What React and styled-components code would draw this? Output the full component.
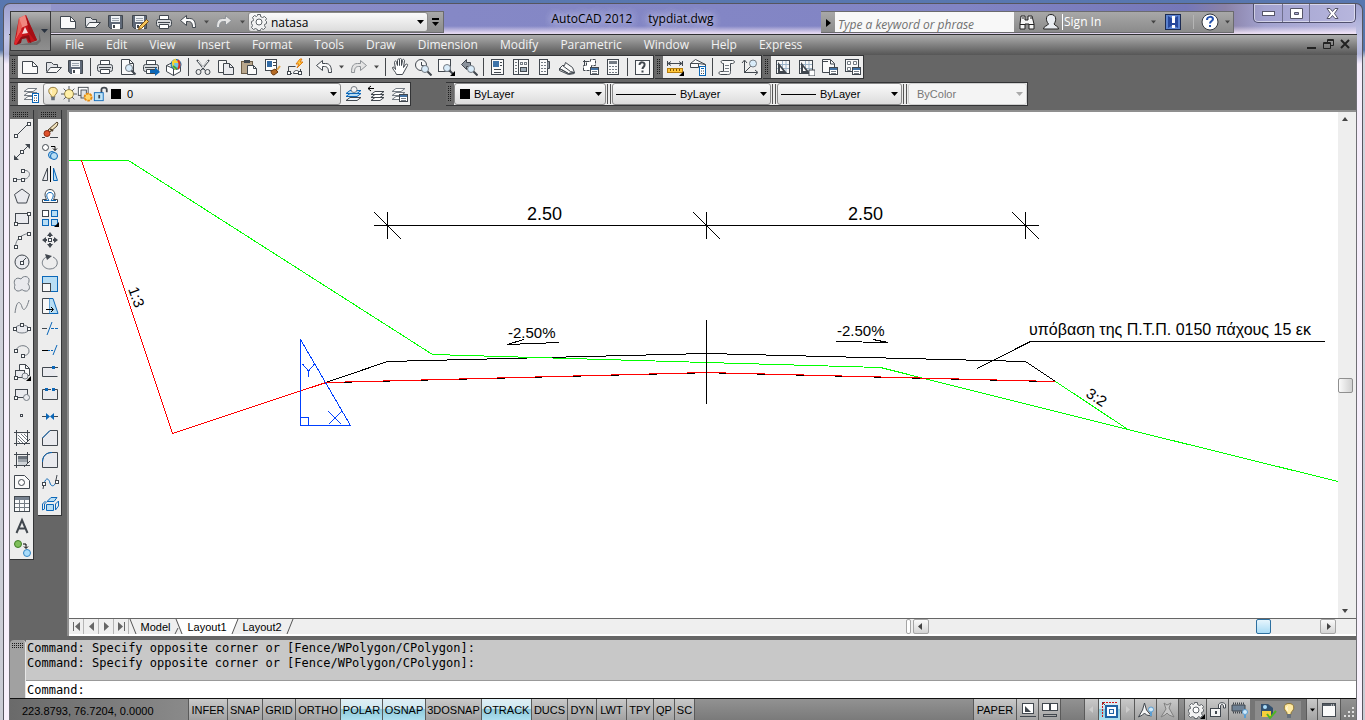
import React from "react";
import styled, { createGlobalStyle, css } from "styled-components";

const UI = `"Open Sans", "Noto Sans", sans-serif`;
const SMALL = `"Liberation Sans", Arial, sans-serif`;
const MONO = `"DejaVu Sans Mono", monospace`;

const D = "#41474e";
const M = "#757c84";
const B = "#0b67b8";
const L = "#b9def4";
const F = "#e9eaee";

const GlobalStyle = createGlobalStyle`
  *, *::before, *::after { box-sizing: border-box; }
  body { margin: 0; font-family: ${UI}; font-size: 12px; color: #000; }
  button, input, select { font: inherit; color: inherit; margin: 0; }
`;

/* ---------- icon drawings, each on an 18 x 18 grid ---------- */
const P = (d, fill = "none", stroke = D, w = 1) => (
  <path d={d} fill={fill} stroke={stroke} strokeWidth={w} />
);
const node = (x, y, c = D) => (
  <rect x={Math.floor(x) - 1.5} y={Math.floor(y) - 1.5} width="3" height="3" fill="#fff" stroke={c} />
);
const mag = (x, y) => (
  <>
    <circle cx={x} cy={y} r="3.500" fill="#d9ecfa" stroke={M} />
    {P(`M${x + 2.5} ${y + 2.5}l4 4`, "none", D, 2)}
  </>
);
const flyout = <path d="M18 13v5h-5z" fill="#000" />;
const floppy = (
  <>
    {P("M1.500 2.500h14v13h-12l-2-2z", "#5e6877")}
    <rect x="4" y="3" width="9" height="6" fill="#eef1f4" />
    <path d="M5 5.500h7M5 7.500h7" stroke="#9aa3ad" />
    <rect x="5" y="11" width="8" height="5" fill="#fff" />
    <rect x="6" y="12" width="2" height="3" fill={D} />
  </>
);
const printer = (
  <>
    {P("M4.500 7V2.500h9V7", "#fff")}
    <rect x="1.500" y="6.500" width="15" height="7" rx="2" fill="#d9dbde" stroke={D} />
    <path d="M3 9.500h12" stroke={D} />
    {P("M4.500 11.500h9v4h-9z", "#fff")}
  </>
);
const pages = (
  <>
    {P("M1.500 2.500h8v12h-8z", "#f7f7f7")}
    {P("M6.500 5.500h6l4 4v7h-10z", F)}
    {P("M12.500 5.500v4h4")}
  </>
);
const sheets = P("M6 3.500h9l-4 3H2zM6 7.500h9l-4 3H2zM6 11.500h9l-4 3H2z", "#fff", M);
const blueSheets = (
  <>
    {P("M6 5.500h11l-4 3H2z", L, B)}
    {P("M6 8.500h11l-4 3H2z", L, B)}
    {P("M6 12.500h11l-4 3H2z", "#eaf5fc", D)}
  </>
);
const smallPanel = (
  <>
    <rect x="9.500" y="9.500" width="8" height="7" fill="#fff" stroke={D} />
    <rect x="10" y="10" width="7" height="2" fill="#4473a5" />
    <path d="M11 13.500h5M11 15.500h5" stroke={M} />
  </>
);
const calcMini = (
  <>
    <rect x="10.500" y="8.500" width="6" height="9" fill="#fff" stroke={B} />
    <path d="M12 10.500h3" stroke={B} />
    <path d="M12 13h1m1 0h1M12 15.500h1m1 0h1" stroke={D} />
  </>
);
const gear = (
  <>
    <path
      d="M7.500 1.500h3v2l2 1 2-1 2 2-1 2 1 1v2l-2 1v1l1 2-2 2-2-1-1 1v1h-3v-1l-2-1-2 1-2-2 1-2-1-2v-2l2-1v-1l-1-2 2-2 2 1 1-1z"
      fill="#f2f2f2" stroke="#5d6267"
    />
    <circle cx="9" cy="9" r="3" fill="#fff" stroke="#5d6267" />
  </>
);
const bulb = (
  <>
    <path d="M9 1.500c-6 0-6 6-2 9v2h4v-2c4-3 4-9-2-9z" fill="#ffe9a0" stroke="#8d7434" />
    <rect x="7" y="12" width="4" height="4" fill="#67707b" />
    <path d="M7.500 4.500c-1 1-1 2 0 4" stroke="#fff" fill="none" />
  </>
);
const undoPath = "M1.500 7.500l6-5v3h3c5 0 6 4 6 9h-3c0-4-1-6-4-6h-2v4z";
const redoPath = "M16.500 7.500l-6-5v3h-3c-5 0-6 4-6 9h3c0-4 1-6 4-6h2v4z";
const binder = (
  <>
    <rect x="2.500" y="2.500" width="13" height="13" fill="#f8f8f8" stroke={D} />
    <path d="M8.500 3v12M3 6.500h12M3 10.500h12M12 3v12" stroke="#9db4c8" />
    <path d="M4 4v11h9z" fill={D} />
    <path d="M6 9v4h3z" fill="#fff" />
  </>
);

const ICONS = {
  new: <>{P("M1.500 3.500h10l5 5v7h-15z", "#fafafa")}{P("M11.500 3.500v5h5")}</>,
  open: <>{P("M2.500 13.500V4.500h5l2 2h4v3", "#e1e3e7")}{P("M2.500 14.500l4-5h11l-5 5z", "#f7f7f7")}</>,
  save: floppy,
  saveas: (
    <>
      {floppy}
      {P("M7.500 16.500l1-3 7-7 2 2-7 7z", "#f6c65b", "#7a4f12")}
    </>
  ),
  print: printer,
  undo: P(undoPath, "#fafafa"),
  redo: P(redoPath, "#e4e4e4", "#8e9296"),
  preview: <>{P("M2.500 1.500h8l4 4v11h-12z", "#fafafa")}{P("M10.500 1.500v4h4")}{mag(10, 10)}</>,
  publish: <>{printer}<path d="M8 12h5V9l5 5-5 4v-3H8z" fill={B} /></>,
  globe: (
    <>
      {P("M1.500 7.500l6-3 8 3v6l-7 4-7-4z", "#fff")}{P("M1.500 7.500l7 3v7")}
      <circle cx="11" cy="6.500" r="5" fill="#6fc3ea" stroke="#155f95" />
      <path d="M11 1.500c-4 2-4 6 0 10M7 4h8" stroke="#f6d232" strokeWidth="2" fill="none" />
      <path d="M13 2c2 3 2 6 0 9" stroke="#d63322" strokeWidth="2" fill="none" />
      <path d="M8 8l4 3" stroke="#3ba43d" strokeWidth="2" />
    </>
  ),
  cut: (
    <>
      {P("M3 2l8 10M15 2L7 12", "none", D, 2)}
      <path d="M4 3l8 9M14 3l-8 9" stroke="#fff" />
      <circle cx="4.500" cy="14" r="2.500" fill="none" stroke={D} />
      <circle cx="13.500" cy="14" r="2.500" fill="none" stroke={D} />
    </>
  ),
  copy: pages,
  paste: (
    <>
      <rect x="1.500" y="3.500" width="11" height="12" fill="#b8a68c" stroke="#6b5b46" />
      <rect x="4" y="2" width="6" height="3" fill={D} />
      {P("M7.500 7.500h6l3 3v6h-9z", "#fafafa")}{P("M13.500 7.500v3h3")}
    </>
  ),
  match: (
    <>
      <rect x="2.500" y="1.500" width="11" height="11" fill="#fff" stroke={D} />
      <rect x="4" y="3" width="5" height="6" fill="#326ba6" />
      <path d="M10 4.500h3M10 7.500h3" stroke={D} />
      <path d="M8 13l4-2 3 3-4 3c-2 0-3-2-3-4z" fill="#b56a24" stroke="#6d3a0e" />
      <path d="M14 12l3-4" stroke="#e2a54c" strokeWidth="2" />
    </>
  ),
  block: (
    <>
      {P("M2.500 15.500v-7h7M2 15.500h4M14.500 11v3", "none")}
      {P("M7.500 15.500c0-4 6-4 6 0z", "#fff")}{node(3, 15)}{node(14, 15)}
      <path d="M14 1l-4 5h3l-2 4 6-6h-3l2-3z" fill="#ffc83d" stroke="#e07b10" />
    </>
  ),
  pan: (
    <path
      d="M5.500 16.500c-1-3-4-5-4-7 1-1 2 0 3 2l-1-7c0-2 2-2 2 0l1 3V2.500c0-2 2-2 2 0v5-6c0-2 2-1 2 0v6l1-5c0-2 2-1 2 0l-1 7 2-3c1-1 3 0 2 1-2 3-3 6-5 9z"
      fill="#fff" stroke={D}
    />
  ),
  zoomrt: <><circle cx="7" cy="7" r="5.500" fill="#f6f6f6" stroke={D} />{P("M7.500 4v3.500h3")}{mag(11, 11)}</>,
  zoomwin: <><rect x="1.500" y="1.500" width="12" height="12" fill="#fafafa" stroke={D} />{mag(10, 10)}{flyout}</>,
  zoomprev: <>{P("M1.500 6.500l5-5v3h4v4h-4v3z", "#8b929b")}{mag(11, 11)}</>,
  props: (
    <>
      <rect x="2.500" y="1.500" width="12" height="15" fill="#fafafa" stroke={D} />
      <rect x="4" y="3" width="6" height="6" fill="#3d73a9" />
      <path d="M11 4.500h2M11 7.500h2M5 11.500h7M5 14.500h7" stroke={D} />
    </>
  ),
  center: (
    <>
      <rect x="1.500" y="1.500" width="15" height="15" fill="#fafafa" stroke={D} />
      <path d="M6.500 2v14" stroke={D} />
      <path d="M3 4.500h2M3 7.500h2M3 10.500h2M3 13.500h2" stroke={M} />
      <rect x="8.500" y="4.500" width="2" height="2" fill="none" stroke={M} />
      <rect x="12.500" y="4.500" width="2" height="2" fill="none" stroke={M} />
      <rect x="8.500" y="9.500" width="6" height="4" fill="#9caab6" stroke={D} />
    </>
  ),
  palette: (
    <>
      <rect x="4.500" y="1.500" width="8" height="15" fill="#fafafa" stroke={D} />
      <path d="M12.500 3.500h2v7h-2" fill="#8b929b" stroke={D} />
      <path d="M6 4.500h5M6 7.500h5M6 10.500h5M6 13.500h5" stroke={M} strokeDasharray="2 1" />
    </>
  ),
  sheetset: (
    <>
      {P("M1.500 10.500l3-3h2l1-3 7 5 2 5-6 1z", "#fafafa")}
      {P("M1.500 10.500l9 5 6-1M4.500 7.500l8 6 4 1M1.500 10.500v2l9 4 6-1")}
    </>
  ),
  markup: <><path d="M2.500 12.500v-5h3v-4h4v-2h5v6h-4v5z" fill="#fff" stroke={D} strokeDasharray="3 1" />{P("M2 3.500h4M3.500 2v5")}{smallPanel}</>,
  calc: (
    <>
      <rect x="3.500" y="1.500" width="11" height="15" fill="#fafafa" stroke={D} />
      <rect x="5" y="3" width="8" height="3" fill={M} />
      <path d="M5 8.500h8M5 11.500h8M5 14.500h8" stroke={M} strokeDasharray="2 1" />
    </>
  ),
  help: (
    <>
      <rect x="2.500" y="2.500" width="14" height="14" fill="#fafafa" stroke={D} />
      {P("M6.500 7c0-4 6-3 5 0 0 2-2 2-2 4M9.500 12.500v2", "none", D, 2)}
    </>
  ),
  measure: (
    <>
      {P("M1.500 3v5M16.500 3v5M2 5.500h14M5 3.500l-3 2 3 2M13 3.500l3 2-3 2")}
      <rect x="1.500" y="10.500" width="15" height="4" fill="#ffc63a" stroke="#b57c0c" />
      <path d="M4.500 11v2M7.500 11v2M10.500 11v2M13.500 11v2" stroke="#7f5200" />
      {flyout}
    </>
  ),
  area: <>{P("M1.500 9.500V5.500l5-4 10 5v2M1.500 9.500h8", "#fafafa")}{P("M1.500 5.500h8l7 1M9.500 5.500v4")}{calcMini}</>,
  list: (
    <>
      {P("M4.500 2.500h10c3 0 2 3 0 3h-2v8c0 3-1 3-3 3h-7c-2 0-2-3 0-3h3v-8c-3 0-3-3-1-3z", "#fafafa")}
      <path d="M7 7.500h4M7 10.500h4M6 13.500h5" stroke={M} />
    </>
  ),
  locate: <>{P("M3.500 3v12M3 14.500h13M1 5l2.500-3L6 5M14 12l3 2.500-3 2.500M4 14l6-6")}<circle cx="12" cy="5.500" r="3.500" fill="#d9ecfa" stroke={M} /></>,
  vp1: binder,
  vp2: <>{binder}<path d="M12 12h6v6h-6z" fill="#fff" stroke={D} /></>,
  vp3: <>{P("M2.500 1.500h8l4 4v9h-12z", "#fafafa")}{P("M2 3.500h6M10.500 2v4h4")}{smallPanel}</>,
  vp4: (
    <>
      <rect x="2.500" y="1.500" width="13" height="12" fill="#fafafa" stroke={D} />
      <path d="M4.500 3.500h3v3h-3zM10.500 3.500h3v3h-3zM4.500 9.500h3v3h-3z" fill="#fff" stroke={M} />
      {smallPanel}
    </>
  ),
  layers: <>{sheets}{calcMini}</>,
  laymake: <>{blueSheets}<circle cx="10" cy="4.500" r="3" fill="#f2f2f2" stroke={M} /></>,
  layprev: <>{P("M8 6.500h9l-4 3H4zM8 9.500h9l-4 3H4zM8 12.500h9l-4 3H4z", "#fff")}{P("M1 3.500h6M4 1L1 3.500 4 6", "none", "#000")}</>,
  laystate: <>{sheets}{smallPanel}</>,
  bulb,
  sun: (
    <>
      <path d="M9 0v18M0 9h18M3 3l12 12M15 3L3 15" stroke="#3f4650" />
      <circle cx="9" cy="9" r="5" fill="#fff0a8" stroke="#8f7c3d" />
    </>
  ),
  vpfreeze: (
    <>
      <rect x="1.500" y="1.500" width="11" height="9" fill="#fff" stroke={D} />
      <rect x="4.500" y="4.500" width="6" height="9" fill="#dfe3e8" stroke={D} />
      <circle cx="12.500" cy="12.500" r="4" fill="#ffd56b" stroke="#e58a10" strokeWidth="2" strokeDasharray="3 1" />
    </>
  ),
  lock: (
    <>
      {P("M9.500 8V4c0-3 6-3 6 0v3", "none", D, 2)}
      <rect x="1.500" y="7.500" width="10" height="9" fill="#bfe4f8" stroke={B} />
      <rect x="6" y="10" width="2" height="4" fill={D} />
    </>
  ),
  line: <>{P("M4 14L15 3")}{node(3, 15)}{node(16, 3)}</>,
  xline: <>{P("M2 16L16 2")}<path d="M1 17v-5l5 5zM17 1v5l-5-5z" fill={D} />{node(9, 9)}</>,
  pline: <>{P("M3 14.500h7M10 5.500h3c5 1 5 8-3 9", "none", M)}{node(2, 15)}{node(10, 6)}{node(10, 15)}</>,
  polygon: P("M9 2l7.500 5.500-3 8.500h-9l-3-8.500z", F),
  rect: <><rect x="2.500" y="4.500" width="13" height="10" fill={F} stroke={D} />{node(3, 15)}{node(16, 5)}</>,
  arc: <>{P("M2.500 15C3 8 8 4 15 2.500", "none", M)}{node(3, 16)}{node(7, 7)}{node(16, 3)}</>,
  circle: <><circle cx="9" cy="9" r="7" fill={F} stroke={D} />{P("M9 9l4-4")}{node(9, 10)}</>,
  cloud: P("M8 4c2-4 9-3 8 2 0 2-1 2-1 3 3 3 1 8-3 7-2 0-2-2-4-1-4 3-8-1-6-5-2-3 0-9 6-6z", F, M),
  spline: P("M2 16C4 0 8 6 9 10S13 14 16 3", "none", M),
  ellipse: <><ellipse cx="9" cy="10" rx="7" ry="4" fill={F} stroke={M} />{node(2, 10)}{node(9, 6)}{node(16, 10)}</>,
  earc: <>{P("M3 9c3-7 14-5 13 2-1 3-4 4-6 3", "none", M)}{node(3, 10)}{node(10, 15)}</>,
  insert: <>{P("M6.500 8V1.500h6l4 4v7h-3", "#fafafa")}{P("M12.500 1.500v4h4")}<rect x="2.500" y="7.500" width="9" height="7" fill={F} stroke={D} /><circle cx="12" cy="13" r="3" fill={F} stroke={M} />{node(3, 15)}{flyout}</>,
  mblock: <><rect x="2.500" y="4.500" width="12" height="8" fill={F} stroke={D} /><circle cx="13.500" cy="12.500" r="3" fill={F} stroke={M} />{node(3, 13)}</>,
  point: <rect x="7.500" y="7.500" width="2" height="2" fill="#fff" stroke={D} />,
  hatch: (
    <>
      <path d="M5 5h9v9H5z" fill="#fff" />
      <path d="M5 6l8 8M5 9l5 5M5 12l2 2M8 5l6 6M11 5l3 3" stroke={M} />
      {P("M3.500 1v16M14.500 1v12M1 3.500h16M1 14.500h16M11 16l6-6")}
    </>
  ),
  gradient: (
    <>
      <path d="M5 5h9v3H5z" fill="#69717a" /><path d="M5 8h9v3H5z" fill="#9aa1a8" /><path d="M5 11h9v3H5z" fill="#d0d4d8" />
      {P("M3.500 1v16M14.500 1v12M1 3.500h16M1 14.500h16M11 16l6-6")}
    </>
  ),
  region: <>{P("M1.500 2.500h10l5 5v8h-15z", "#fafafa")}<circle cx="8.500" cy="9.500" r="3" fill="#fff" stroke={D} /></>,
  table: (
    <>
      <rect x="1.500" y="1.500" width="15" height="15" fill="#fafafa" stroke={D} />
      <rect x="2" y="2" width="14" height="3" fill="#76818f" />
      <path d="M2 8.500h14M2 12.500h14M6.500 5v11M11.500 5v11" stroke={M} />
    </>
  ),
  mtext: P("M3.500 16L9 3l5.500 13M5.500 11.500h7", "none", D, 2),
  addsel: (
    <>
      <circle cx="5" cy="5" r="3.500" fill="#7fbf5a" stroke="#3f7d27" />
      <circle cx="14" cy="14" r="3.500" fill="#a9dcfa" stroke="#3386c4" />
      {P("M10 5h3v4M11 7.500l2 2 2-2", "none", "#000")}
    </>
  ),
  erase: (
    <>
      <path d="M7 9l9-8 1 1-1 3-7 6z" fill="#f2e3bd" stroke="#54432c" />
      <path d="M9 8l3 2" stroke="#54432c" strokeWidth="2" />
      <circle cx="6" cy="12.500" r="3" fill="#e0512b" stroke="#8b2a10" />
      {P("M1 16.500h3M9 16.500h8")}
    </>
  ),
  mcopy: (
    <>
      <circle cx="4.500" cy="4.500" r="3" fill="#fff" stroke={D} />
      <circle cx="11" cy="12" r="3.500" fill={L} stroke={B} />
      <circle cx="13" cy="13" r="3.500" fill={L} stroke={B} />
      {P("M10 3.500h4v4M12 5.500l2 2 2-2", "none", "#000")}
    </>
  ),
  mirror: <>{P("M6.500 3v12.500h-5z", F)}{P("M9.500 1v16", "none", "#000")}{P("M12.500 3v12.500h4z", L, B)}</>,
  offset: (
    <>
      {P("M1.500 15.500v-3h4c-3-5-1-10 3.500-10s6.500 5 3.500 10h4v3z", "#fff", D)}
      {P("M3 13.500h5c-4-5-2-8 1-8s5 3 1 8h5", "none", B)}
    </>
  ),
  array: (
    <>
      <rect x="1.500" y="1.500" width="6" height="6" fill="#fff" stroke={D} />
      <rect x="10.500" y="1.500" width="6" height="6" fill={L} stroke={B} />
      <rect x="1.500" y="10.500" width="6" height="6" fill={L} stroke={B} />
      <rect x="10.500" y="10.500" width="6" height="6" fill={L} stroke={B} />
      {flyout}
    </>
  ),
  move: (
    <>
      <path d="M9 1l3 4H6zM9 17l3-4H6zM1 9l4-3v6zM17 9l-4-3v6z" fill={D} />
      {P("M9 4v2M9 12v2M4 9h2M12 9h2", "none", D, 2)}
      <rect x="7.500" y="7.500" width="3" height="3" fill="#fff" stroke={D} />
    </>
  ),
  rotate: <>{P("M6 3.500c-8 4-5 12.500 3 12.500s10-9 3-12", "none", M)}<path d="M4 1l7 2-5 4z" fill={D} /></>,
  scale: <><rect x="1.500" y="1.500" width="15" height="15" fill={L} stroke={B} /><rect x="1.500" y="8.500" width="8" height="8" fill="#f7f7f7" stroke={D} /></>,
  stretch: <>{P("M8 1.500h4l5 15H8z", L, B)}{P("M8 1.500H1.500v15H8", "#f7f7f7")}{P("M5 12.500h7M10 10l2.500 2.500L10 15", "none", "#000")}</>,
  trim: <>{P("M1 9.500h5")}{P("M6 16l5-13", "none", B)}<path d="M10 9.500h7" stroke={B} strokeDasharray="3 1" /></>,
  extend: <>{P("M1 9.500h6", "none", "#000")}<path d="M7 9.500h5" stroke={B} strokeDasharray="2 1" />{P("M12 14l4-10", "none", B)}</>,
  breakpt: <>{P("M11 4.500H1.500v9h15M14 4.500h3", F)}<path d="M11 3h3v3h-3z" fill={B} /></>,
  break: <>{P("M4 4.500H1.500v10h15v-10H14M7 4.500h3", F)}<path d="M4 3h3v3H4zM11 3h3v3h-3z" fill={B} /></>,
  join: <>{P("M1 9.500h5M12 9.500h5")}<path d="M5 6l4 3.500L5 13zM13 6L9 9.500l4 3.500z" fill={B} /></>,
  chamfer: <>{P("M9 1.500h7.500v15h-15V9L9 1.500", F)}{P("M1.500 9L9 1.500", "none", B)}</>,
  fillet: <>{P("M11 1.500h5.500v15h-15V11C1.500 5 5 1.500 11 1.500", F)}{P("M1.500 11c0-6 4-9.500 9.500-9.500", "none", B)}</>,
  blend: <>{P("M2 16l1-5M16 2l-1 5")}{P("M3 11C5 3 8 6 9 10s5 4 6-2", "none", B)}{node(3, 11)}{node(16, 9)}</>,
  explode: (
    <>
      {P("M5.500 9.500h7v6h-7z", L, B)}{P("M6 6.500l4-4h6l-3 4z", L, B)}{P("M14.500 9l3-3v5l-3 4zM1.500 9l3-3M1.500 9v6l2-1V9l2-2", "none", B)}
    </>
  ),
  gear,
  find: (
    <>
      <path d="M3 3h4v4h3V3h4l2 8v5h-5v-5H7v5H2v-5z" fill="#f5f5f5" stroke="#222" />
      <path d="M2 11.500h5M11 11.500h5M4 5h2M12 5h2" stroke="#222" />
    </>
  ),
  person: <path d="M1.500 16c0-3 4-3 5-5C3 7 4 1.500 9 1.500s6 5.500 3 9.500c1 2 4.500 2 4.500 5z" fill="#e8ecf2" stroke="#222" />,
  exchange: (
    <>
      <rect x="1.500" y="1.500" width="15" height="15" fill="#5b82cf" stroke="#1c2b52" />
      <path d="M4 3l5 3 5-3v12l-5-3-5 3z" fill="#27489c" />
      <path d="M8 3h3v7H8zM8 12h3v3H8z" fill="#fff" />
    </>
  ),
  helpround: (
    <>
      <circle cx="9" cy="9" r="8" fill="#fff" stroke="#33383f" />
      {P("M6 7c0-4 6-4 6-1 0 2-3 2-3 4.500M9 12v2", "none", "#2351ad", 2)}
    </>
  ),
  modelspace: (
    <>
      <rect x="3.500" y="2.500" width="11" height="10" fill="#fff" stroke={D} />
      <path d="M6 5v6h6z" fill={D} /><path d="M1 15.500h16" stroke={D} />
    </>
  ),
  quickview: (
    <>
      <rect x="1.500" y="2.500" width="7" height="7" fill="#fff" stroke={D} /><rect x="9.500" y="2.500" width="7" height="7" fill="#fff" stroke={D} />
      <rect x="2.500" y="13.500" width="13" height="2" fill="#aaa" stroke={D} />
    </>
  ),
  maximize: (
    <>
      <path d="M1.500 16V1.500H17" fill="none" stroke="#d31818" strokeDasharray="2 1" />
      <path d="M1 1l4 4" stroke={D} />
      <rect x="5" y="5" width="11" height="11" fill="#fff" stroke="#1f63a5" strokeWidth="2" />
      <rect x="8.500" y="8.500" width="4" height="4" fill="#e7f3fb" stroke="#1f63a5" />
    </>
  ),
  anno: (
    <>
      {P("M7.500 2l2 7 5 6-5-1-2-2-2 2-4 2 4-7z", "#f4f4f4")}
      <circle cx="14" cy="8.500" r="2.500" fill="#cfeafb" stroke="#5b9ed2" /><path d="M13 11h2v4h-2z" fill="#5b9ed2" />
    </>
  ),
  annoauto: P("M5 2l3 2 4-2-2 5 5 9-5-2-2-2-2 2-4 2 5-8z", "#c6c6c6", "#808080"),
  wsgear: <>{gear}{flyout}</>,
  unlock: (
    <>
      {P("M9.500 8V4c0-3 7-3 7 0v3h-2V5c0-2-3-2-3 0v3", "#fff")}
      <rect x="1.500" y="7.500" width="10" height="8" fill="#f4f4f4" stroke={D} /><path d="M7 10v3" stroke={D} strokeWidth="2" />
    </>
  ),
  hardware: (
    <>
      <path d="M1 4h13v6H1z" fill="#6f8296" stroke={D} /><path d="M2 2.500h12M2 11.500h9" stroke={D} strokeDasharray="1 1" strokeWidth="2" />
      <circle cx="14" cy="11" r="2.500" fill="#cfeafb" stroke="#5b9ed2" /><path d="M13 14h2v3h-2z" fill="#5b9ed2" />
    </>
  ),
  tray: (
    <>
      <path d="M2 2h7l5 4v8H2z" fill="#32506f" /><path d="M3 9h9v6H3z" fill="#f6cf3c" />
      <circle cx="6" cy="5" r="2" fill="#a9dcfa" />
      <path d="M8 12l3 4 6-7" fill="none" stroke="#4fb524" strokeWidth="2" />
    </>
  ),
  clean: (
    <>
      <rect x="2.500" y="2.500" width="13" height="13" fill="#fafafa" stroke={D} /><path d="M3 3h12v2H3z" fill="#545b63" />
      <path d="M11 4h3" stroke="#fff" strokeDasharray="1 1" />
    </>
  ),
};

const Icon = ({ name, size = 18 }) => (
  <svg width={size} height={size} viewBox="0 0 18 18" aria-hidden="true">{ICONS[name]}</svg>
);
const Caret = ({ color = "#222", size = 7 }) => (
  <svg width={size} height="4" viewBox="0 0 7 4" aria-hidden="true"><path d="M0 0h7L3.500 4z" fill={color} /></svg>
);

/* ---------- window chrome ---------- */
const Desktop = styled.div`
  min-height: 100vh;
  padding: 3px 2px 0 3px;
  display: flex;
  background: linear-gradient(180deg, #5877b0 0, #5674a8 50px, #d3d5de 58px, #c9cbd4 100%);
`;
const Frame = styled.div`
  flex: 1;
  min-width: 0;
  display: flex;
  flex-direction: column;
  padding: 0 5px;
  border: 1px solid #56565f;
  border-bottom: 0;
  border-radius: 7px 7px 0 0;
  background: linear-gradient(180deg, #9c9fce 0, #c3c5e6 34px, #b3b7dc 50px, #f6edfb 60px, #f8f1fc 100%);
`;
const Header = styled.header`
  display: grid;
  grid-template-columns: 41px minmax(0, 1fr);
  grid-template-rows: 30px 21px;
  padding: 0 1px;
`;
const AppButton = styled.button`
  grid-area: 1 / 1 / 3 / 2;
  z-index: 1;
  margin: 7px 0 4px;
  padding: 0 2px;
  display: flex;
  align-items: center;
  justify-content: space-between;
  border: 1px solid #39393b;
  background: linear-gradient(180deg, #b2b2b2, #7b7b7b 45%, #8f8f8f);
`;
const TitleBar = styled.div`
  grid-area: 1 / 2;
  display: flex;
  align-items: flex-end;
  background:
    linear-gradient(180deg, transparent 22px, rgba(250, 235, 250, 0.8) 29px),
    linear-gradient(90deg, #9294ca 0, #8588c6 400px, #8184c4 70%, #7577b8 87%, #8a82a8 90%, #a3a3d0 93%, #b7b6dd 100%);
  padding-bottom: 1px;
`;
const MenuBar = styled.nav`
  grid-area: 2 / 1 / 3 / 3;
  display: flex;
  align-items: center;
  margin: 0 -1px;
  padding: 0 4px 0 45px;
  border-top: 1px solid #2f2f31;
  background: linear-gradient(180deg, #adadad, #565656);
`;
const MenuItem = styled.button`
  height: 20px;
  padding: 0 11px;
  border: 0;
  background: none;
  color: #f2f2f2;
  font-size: 12px;
  line-height: 20px;
  white-space: nowrap;
`;
const DocButtons = styled.div`
  margin-left: auto;
  display: flex;
  gap: 2px;
`;
const DocButton = styled.button`
  width: 15px;
  height: 16px;
  padding: 0;
  border: 0;
  background: none;
`;
const GreyBar = styled.div`
  display: flex;
  align-items: center;
  height: 22px;
  border: 1px solid #6b6b6e;
  border-left: 0;
  background: linear-gradient(180deg, #a8a8a8, #8b8b8b);
`;
const QuickAccess = styled(GreyBar)`
  padding-left: 5px;
`;
const ToolButton = styled.button`
  width: ${(p) => p.$w || 23}px;
  height: ${(p) => p.$h || 20}px;
  flex: none;
  padding: 0;
  display: flex;
  align-items: center;
  justify-content: center;
  border: 0;
  background: none;
`;
const Title = styled.h1`
  flex: 1;
  min-width: 0;
  margin: 0;
  display: flex;
  justify-content: center;
  gap: 16px;
  align-self: center;
  font-size: 12px;
  line-height: 28px;
  font-weight: 400;
  white-space: nowrap;
  text-shadow: 0 0 8px #dcdcf4, 0 0 8px #dcdcf4;
`;
const SearchInput = styled.input`
  width: 179px;
  height: 20px;
  padding: 4px 3px 0;
  border: 0;
  background: #f8f8f8;
  font-style: italic;
  font-size: 12px;
  &::placeholder { color: #707070; opacity: 1; }
`;
const SignIn = styled.button`
  display: flex;
  align-items: center;
  justify-content: space-between;
  width: 96px;
  height: 16px;
  padding: 0 2px 0 1px;
  border: 0;
  border-left: 1px solid #fff;
  background: none;
  color: #fff;
  line-height: 16px;
`;
const Rule = styled.span`
  width: 1px;
  height: 14px;
  margin: 0 5px;
  background: #b5b5b5;
`;
const WindowButtons = styled.div`
  display: flex;
  align-self: flex-start;
  height: 19px;
  margin-left: 19px;
  border: 1px solid #50506e;
  border-top: 0;
  border-radius: 0 0 5px 5px;
  box-shadow: inset 0 0 0 1px rgba(255, 255, 255, 0.5);
`;
const WindowButton = styled.button`
  width: ${(p) => p.$w}px;
  padding: 0;
  border: 0;
  background: none;
  display: flex;
  align-items: center;
  justify-content: center;
  & + & { border-left: 1px solid #70708e; }
`;

/* ---------- toolbars ---------- */
const Workspace = styled.div`
  flex: 1;
  display: flex;
  flex-direction: column;
  border: 1px solid #6f6f74;
  border-width: 0 1px;
  background: #666;
`;
const ToolRow = styled.div`
  display: flex;
  gap: ${(p) => p.$gap || 2}px;
  margin-bottom: ${(p) => p.$after}px;
`;
const Strip = styled.div`
  display: flex;
  align-items: center;
  height: 24px;
  border: 1px solid #333436;
  border-width: 1px 0;
  background: #ededed;
  box-shadow: 1px 0 #333436;
`;
const dots = (c) => css`
  repeating-linear-gradient(180deg, transparent 0 1px, ${c} 1px 2px),
  repeating-linear-gradient(90deg, #1c1c1c 0 1px, ${c} 1px 2px)
`;
const Grip = styled.span`
  flex: none;
  align-self: stretch;
  width: ${(p) => (p.$flat ? "auto" : "8px")};
  height: ${(p) => (p.$flat ? "9px" : "auto")};
  background: ${dots("#6b6b6b")};
  border: solid #6b6b6b;
  border-width: ${(p) => (p.$flat ? "2px 4px 2px 3px" : "3px 2px 3px 2px")};
`;
const Divider = styled.span`
  width: 1px;
  height: 18px;
  margin: 0 2px 0 3px;
  background: #44474b;
  flex: none;
`;
const ComboBox = styled.div`
  position: relative;
  display: flex;
  align-items: center;
  width: ${(p) => p.$w}px;
  height: ${(p) => p.$h || 22}px;
  padding-left: ${(p) => (p.$tight ? 1 : 3)}px;
  border: 1px solid ${(p) => (p.$off ? "#d0d0d0" : "#8a8a8a")};
  border-radius: 3px;
  background: ${(p) => (p.$off ? "#f4f4f4" : "linear-gradient(180deg, #fafafa, #dcdcdc)")};
  color: ${(p) => (p.$off ? "#777" : "#000")};
  & > svg { flex: none; }
`;
const Select = styled.select`
  flex: 1;
  min-width: 0;
  height: 100%;
  padding: 0 16px 0 ${(p) => p.$pad || 4}px;
  appearance: none;
  border: 0;
  background: none;
  color: inherit;
  opacity: 1;
  font-family: ${(p) => (p.$ui ? UI : SMALL)};
  font-size: ${(p) => (p.$ui ? 12 : 11)}px;
`;
const ComboCaret = styled.span`
  position: absolute;
  right: 3px;
  top: 0;
  bottom: 0;
  display: flex;
  align-items: center;
  pointer-events: none;
`;
const Swatch = styled.span`
  width: 10px;
  height: 10px;
  margin: 0 0 0 2px;
  background: #000;
  flex: none;
`;
const LineSample = styled.span`
  width: ${(p) => p.$w}px;
  height: 1px;
  background: #000;
  flex: none;
`;
const StripSplit = styled.span`
  width: 4px;
  height: 20px;
  margin: 0 1px;
  border: 1px solid #555;
  border-width: 0 1px;
  flex: none;
`;

function Combo({ w, h, label, value, children, pad, off, ui, tight }) {
  return (
    <ComboBox $w={w} $h={h} $off={off} $tight={tight}>
      {children}
      <Select aria-label={label} $pad={pad} $ui={ui} disabled={off} defaultValue={value}>
        <option>{value}</option>
      </Select>
      <ComboCaret><Caret color={off ? "#aaa" : "#000"} /></ComboCaret>
    </ComboBox>
  );
}

const Tools = ({ items, w, h }) =>
  items.map((t, i) => {
    if (t === "|") return <Divider key={i} />;
    if (t === "v") return <ToolButton key={i} $w={12} $h={h} aria-label="More"><Caret size={5} color="#4a4a4a" /></ToolButton>;
    return <ToolButton key={i} $w={w} $h={h} aria-label={t} title={t}><Icon name={t} /></ToolButton>;
  });

/* ---------- work area ---------- */
const Main = styled.main`
  flex: 1;
  min-height: 0;
  display: flex;
  align-items: flex-start;
  gap: 4px;
`;
const Palette = styled.div`
  display: flex;
  flex-direction: column;
  align-items: center;
  width: 24px;
  flex: none;
  background: #ededed;
  border: 1px solid #333436;
  border-width: 0 1px 1px 0;
  & > ${Grip} { align-self: stretch; }
`;
const Document = styled.section`
  flex: 1;
  min-width: 0;
  align-self: stretch;
  display: grid;
  grid-template-columns: minmax(0, 1fr) 18px;
  grid-template-rows: minmax(0, 1fr) 18px;
  margin-left: 1px;
  border: 2px solid #8f8f8f;
  border-width: 2px 0 0 2px;
  background: #fff;
`;
const Drawing = styled.svg`
  width: 100%;
  height: 100%;
  display: block;
  background: #fff;
  font-family: ${SMALL};
`;
const ScrollBar = styled.div`
  display: flex;
  flex-direction: ${(p) => (p.$vertical ? "column" : "row")};
  align-items: center;
  background: #eee;
  ${(p) => p.$vertical && css`
    padding-right: 3px;
  `}
`;
const Spacer = styled.span`
  flex: ${(p) => p.$grow} 1 0;
`;
const ScrollButton = styled.button`
  width: 16px;
  height: 15px;
  padding: 0;
  display: flex;
  align-items: center;
  justify-content: center;
  border: 1px solid ${(p) => (p.$plain ? "transparent" : "#a5a5a5")};
  border-radius: 2px;
  background: ${(p) => (p.$plain ? "none" : "linear-gradient(180deg, #fafafa, #d5d5d5)")};
`;
const Thumb = styled.span`
  width: 15px;
  height: 15px;
  border: 1px solid ${(p) => (p.$active ? "#2c6f9f" : "#8f8f8f")};
  border-radius: 2px;
  background: ${(p) => (p.$active ? "linear-gradient(180deg, #e6f5fd, #a9dbf5)" : "linear-gradient(90deg, #fafafa, #d0d0d0)")};
`;
const TabRow = styled.div`
  grid-column: 1 / 3;
  display: flex;
  align-items: stretch;
  border-top: 1px solid #666;
  border-bottom: 2px solid #fff;
  background: #efefef;
`;
const TabNav = styled.button`
  width: 15px;
  padding: 0;
  border: 0;
  border-right: 1px solid #b5b5b5;
  background: none;
`;
const Tab = styled.button`
  height: 15px;
  width: ${(p) => p.$w}px;
  padding: 0;
  border: 0;
  background: ${(p) => (p.$active ? "#fff" : "none")};
  font-family: ${SMALL};
  font-size: 11px;
  line-height: 16px;
`;
const HScroll = styled.div`
  display: flex;
  width: 35%;
  margin-left: auto;
`;
const HScrollBody = styled(ScrollBar)`
  flex: 1;
  margin: 0 20px 0 2px;
`;
const SplitHandle = styled.span`
  width: 5px;
  border: 1px solid #a5a5a5;
  border-radius: 2px;
  background: #fff;
`;

/* ---------- command line ---------- */
const CommandPanel = styled.section`
  display: flex;
  margin-top: 4px;
  font-family: ${MONO};
  font-size: 12px;
  line-height: 15px;
`;
const CommandGrip = styled.div`
  width: 16px;
  border-radius: 4px 4px 0 0;
  background: #a1a1a1;
  border-right: 1px solid #e6e6e6;
`;
const GripDots = styled.div`
  margin: 3px 2px 0;
  height: 5px;
  background: ${dots("#a1a1a1")};
`;
const CommandBody = styled.div`
  flex: 1;
  min-width: 0;
`;
const History = styled.div`
  height: 41px;
  padding: 1px 1px 0;
  background: #c8c8c8;
  border-bottom: 1px solid #999;
  white-space: pre;
`;
const CommandLabel = styled.label`
  display: flex;
  height: 17px;
  padding: 2px 1px 0;
  background: #fff;
`;
const CommandInput = styled.input`
  flex: 1;
  min-width: 0;
  padding: 0 4px;
  border: 0;
  outline: 0;
  background: none;
`;

/* ---------- status bar ---------- */
const StatusBar = styled.footer`
  display: flex;
  height: 22px;
  border-top: 1px solid #111;
  background: linear-gradient(180deg, #929292, #7a7a7a);
  font-family: ${SMALL};
  font-size: 11px;
`;
const Coordinates = styled.div`
  width: 178px;
  padding: 2px 0 0 12px;
  line-height: 20px;
  background: linear-gradient(90deg, #6a6a6a, #8a8a8a);
`;
const StatusButton = styled.button`
  width: ${(p) => p.$w}px;
  flex: none;
  padding: 0;
  display: flex;
  align-items: center;
  justify-content: center;
  border: 0;
  border-left: 1px solid #5a5a5a;
  white-space: nowrap;
  background: ${(p) =>
    p.$on
      ? "linear-gradient(180deg, #e0eff5 0, #cfe8f0 45%, #8fcadb 50%, #addfee)"
      : "linear-gradient(180deg, #c9c9c9, #a2a2a2)"};
`;
const StatusGap = styled.span`
  width: ${(p) => p.$w}px;
  border-left: 1px solid #5a5a5a;
`;
const Tray = styled.div`
  display: flex;
  align-items: center;
  justify-content: center;
  gap: 3px;
  width: 56px;
  background: #8c8c8c;
  border: 4px solid #757575;
  border-width: 2px 5px 0;
`;
const StatusRight = styled.div`
  display: flex;
  margin-left: auto;
`;

const MENUS = ["File", "Edit", "View", "Insert", "Format", "Tools", "Draw", "Dimension", "Modify", "Parametric", "Window", "Help", "Express"];
const DRAW = ["line", "xline", "pline", "polygon", "rect", "arc", "circle", "cloud", "spline", "ellipse", "earc", "insert", "mblock", "point", "hatch", "gradient", "region", "table", "mtext", "addsel"];
const MODIFY = ["erase", "mcopy", "mirror", "offset", "array", "move", "rotate", "scale", "stretch", "trim", "extend", "breakpt", "break", "join", "chamfer", "fillet", "blend", "explode"];
const STANDARD = ["new", "open", "save", "|", "print", "preview", "publish", "globe", "|", "cut", "copy", "paste", "match", "block", "|", "undo", "v", "redo", "v", "|", "pan", "zoomrt", "zoomwin", "zoomprev", "|", "props", "center", "palette", "sheetset", "markup", "calc", "|", "help"];
const MODES = [
  ["INFER", 39], ["SNAP", 35], ["GRID", 33], ["ORTHO", 45], ["POLAR", 42, true], ["OSNAP", 43, true],
  ["3DOSNAP", 56], ["OTRACK", 50, true], ["DUCS", 36], ["DYN", 29], ["LWT", 30], ["TPY", 27], ["QP", 21], ["SC", 20],
];

const Arrow = ({ d, color = "#444" }) => (
  <svg width="13" height="11" viewBox="0 0 13 11" aria-hidden="true"><path d={d} fill={color} /></svg>
);

function Section() {
  return (
    <Drawing role="img" aria-label="Road cross section">
      <g transform="translate(-69 -112)">
        <g fill="none" strokeWidth="1" shapeRendering="crispEdges">
          <polyline points="326,382.500 387.500,361.500 706.500,353.500 1025.500,361.500 1055.500,381.500" stroke="#000" />
          <polyline points="326,382.700 706.500,372.700 1055.500,381.700" stroke="#000" />
          <polyline points="69,160.500 128.500,160.500 432.500,354.500 706.500,362.500 880.500,367.500 1128,429.500 1338,481.500" stroke="#0f0" />
          <path d="M1055.500 381.500L1128 429.500" stroke="#0f0" />
          <polyline points="81.500,160.500 172.500,433.500 326,382.500 706.500,372.500 1055.500,381.500" stroke="#f00" />
          <path d="M374 225.500H1039M387.500 212v27M706.500 212v27M1025.500 212v27" stroke="#000" />
          <path d="M374.500 212.500l27 27M693.500 212.500l27 27M1012.500 212.500l27 27" stroke="#000" />
          <path d="M706.500 320v84" stroke="#000" />
          <path d="M507 344.500l52-2M507 344.500l17-5M836 341.500l52 1M888 342.500l-15-3" stroke="#000" />
          <path d="M1325 341.500H1030.500L977 368.500" stroke="#000" />
          <path d="M300.500 339.500v86h50zM300.500 417.500h8v8" stroke="#0040ff" />
          <path d="M302.500 364l6 7 6-7M308.500 371v6M328.500 411.500l13 13M341.500 411.500l-13 13" stroke="#0040ff" />
        </g>
        <g fontSize="18">
          <text x="527" y="220">2.50</text>
          <text x="848" y="220">2.50</text>
        </g>
        <g fontSize="15">
          <text x="508" y="338">-2.50%</text>
          <text x="837" y="336">-2.50%</text>
          <text transform="translate(128 289) rotate(70)">1:3</text>
          <text transform="translate(1085 396) rotate(33)">3:2</text>
        </g>
        <text x="1029" y="335" fontSize="16">υπόβαση της Π.Τ.Π. 0150 πάχους 15 εκ</text>
      </g>
    </Drawing>
  );
}

export default function App() {
  return (
    <Desktop>
      <GlobalStyle />
      <Frame>
        <Header>
          <AppButton aria-label="Application menu">
            <svg width="28" height="36" viewBox="0 0 28 36" aria-hidden="true">
              <path d="M3 32l20-3 3-2v-8l2 9-4 4z" fill="#444" opacity=".4" />
              <path d="M6 5l7-3 3 8 2 4 6 13-2 1-7 2-2-5-5 1-1 4-5 2-1-1z" fill="#c3151b" />
              <path d="M6 5l6-3 3 10-7 3z" fill="#f08880" />
              <path d="M6 5L4 21l-2 7 6-10 1-5z" fill="#e86058" />
              <path d="M13 2l11 25-2 1-6-8z" fill="#a50f15" />
              <path d="M2 28l6-10 2 1-2 7-1 4-5 2z" fill="#e0252b" />
              <path d="M9 21l3-7 3 6z" fill="#fff" opacity=".85" />
              <path d="M8 24l8-2 2 7 6-2-7 3-3-5-5 1-1 4-5 2z" fill="#8d0f14" />
            </svg>
            <Caret color="#2a3340" />
          </AppButton>
          <TitleBar>
            <QuickAccess>
              <Tools w={24} items={["new", "open", "save", "saveas", "print", "undo", "v", "redo", "v"]} />
              <Combo w={180} h={20} label="Workspace" value="natasa" ui pad={3} tight><Icon name="gear" size={18} /></Combo>
              <ToolButton $w={15} aria-label="Customize">
                <svg width="9" height="9" viewBox="0 0 9 9" aria-hidden="true"><path d="M1 0h7v2H1zM1 4h7L4.500 8z" fill="#000" /></svg>
              </ToolButton>
            </QuickAccess>
            <Title><span>AutoCAD 2012</span><span>typdiat.dwg</span></Title>
            <GreyBar as="form" role="search">
              <ToolButton $w={14} type="button" aria-label="Collapse search"><Arrow d="M4 2l5 4-5 4z" color="#000" /></ToolButton>
              <SearchInput aria-label="Search" placeholder="Type a keyword or phrase" />
              <ToolButton $w={25} type="button" aria-label="Find"><Icon name="find" /></ToolButton>
              <ToolButton type="button" aria-label="Account"><Icon name="person" /></ToolButton>
              <SignIn type="button">Sign In<Caret size={5} color="#444" /></SignIn>
              <ToolButton type="button" $w={30} aria-label="Exchange"><Icon name="exchange" /></ToolButton>
              <Rule />
              <ToolButton type="button" $w={22} aria-label="Help"><Icon name="helpround" /></ToolButton>
              <ToolButton type="button" $w={12} aria-label="Help menu"><Caret size={5} color="#444" /></ToolButton>
            </GreyBar>
            <WindowButtons>
              <WindowButton $w={28} aria-label="Minimize"><svg width="13" height="5"><rect x=".5" y=".5" width="12" height="4" fill="#fff" stroke="#555568" /></svg></WindowButton>
              <WindowButton $w={27} aria-label="Maximize"><svg width="13" height="11"><path d="M.5.5h12v10H.5zM4.500 4.500v2h4v-2z" fill="#fff" stroke="#555568" fillRule="evenodd" /></svg></WindowButton>
              <WindowButton $w={46} aria-label="Close"><svg width="13" height="11"><path d="M1 .5h3l2.500 3L9 .5h3L8.500 5.500l3.500 5H9l-2.500-3-2.500 3H1l3.500-5z" fill="#fff" stroke="#555568" /></svg></WindowButton>
            </WindowButtons>
          </TitleBar>
          <MenuBar aria-label="Main menu">
            {MENUS.map((m) => <MenuItem key={m}>{m}</MenuItem>)}
            <DocButtons>
              <DocButton aria-label="Minimize drawing"><svg width="13" height="12"><path d="M2 9h9v2H2z" fill="#222" /></svg></DocButton>
              <DocButton aria-label="Restore drawing"><svg width="13" height="12"><path d="M1.500 4.500h7v6h-7zM5.500 4V1.500h6v6H9M1 5.500h8M5 2.500h7" fill="none" stroke="#222" /></svg></DocButton>
              <DocButton aria-label="Close drawing"><svg width="13" height="12"><path d="M2 2l8 8M10 2l-8 8" stroke="#222" strokeWidth="2" /></svg></DocButton>
            </DocButtons>
          </MenuBar>
        </Header>

        <Workspace>
          <ToolRow $after={3}>
            <Strip><Grip /><Tools items={STANDARD} w={23} /></Strip>
            <Strip><Grip /><Tools items={["measure", "area", "|", "list", "locate"]} /></Strip>
            <Strip><Grip /><Tools items={["vp1", "vp2", "vp3", "vp4"]} /></Strip>
          </ToolRow>
          <ToolRow $gap={36} $after={4}>
            <Strip>
              <Grip />
              <Tools items={["layers"]} w={25} />
              <Combo w={298} label="Layer" value="0" pad={6} tight>
                {["bulb", "sun", "vpfreeze", "lock"].map((n) => <Icon key={n} name={n} size={16} />)}
                <Swatch />
              </Combo>
              <Tools items={["laymake", "layprev", "laystate"]} />
            </Strip>
            <Strip>
              <Grip />
              <Combo w={152} label="Color" value="ByLayer"><Swatch /></Combo>
              <StripSplit />
              <Combo w={159} label="Linetype" value="ByLayer" pad={4}><LineSample $w={60} /></Combo>
              <StripSplit />
              <Combo w={125} label="Lineweight" value="ByLayer" pad={4}><LineSample $w={35} /></Combo>
              <StripSplit />
              <Combo w={119} label="Plot style" value="ByColor" off pad={5} />
            </Strip>
          </ToolRow>

          <Main>
            <Palette><Grip $flat /><Tools items={DRAW} h={22} /></Palette>
            <Palette><Grip $flat /><Tools items={MODIFY} h={22} /></Palette>
            <Document>
              <Section />
              <ScrollBar $vertical>
                <ScrollButton $plain aria-label="Scroll up"><Arrow d="M3 7l3-4 3 4z" /></ScrollButton>
                <Spacer $grow={252} />
                <Thumb />
                <Spacer $grow={211} />
                <ScrollButton $plain aria-label="Scroll down"><Arrow d="M3 4h6L6 8z" /></ScrollButton>
              </ScrollBar>
              <TabRow>
                <TabNav aria-label="First tab"><Arrow d="M3 1h1v9H3zM10 1v9L5 5.500z" color="#666" /></TabNav>
                <TabNav aria-label="Previous tab"><Arrow d="M9 1v9L4 5.500z" color="#666" /></TabNav>
                <TabNav aria-label="Next tab"><Arrow d="M4 1v9l5-4.500z" color="#666" /></TabNav>
                <TabNav aria-label="Last tab"><Arrow d="M3 1v9l5-4.500zM9 1h1v9H9z" color="#666" /></TabNav>
                <svg width="8" height="15" aria-hidden="true"><path d="M1 0l6 15" stroke="#555" /></svg>
                <Tab $w={37}>Model</Tab>
                <svg width="9" height="15" aria-hidden="true"><path d="M3 0h6v15z" fill="#fff" /><path d="M1 15L4 9M2 0l6 15" stroke="#555" fill="none" /></svg>
                <Tab $w={48} $active>Layout1</Tab>
                <svg width="8" height="15" aria-hidden="true"><path d="M0 0h7L1 15H0z" fill="#fff" /><path d="M7 0L1 15" stroke="#555" /></svg>
                <Tab $w={46}>Layout2</Tab>
                <svg width="9" height="15" aria-hidden="true"><path d="M8 0L2 15" stroke="#555" /></svg>
                <HScroll>
                  <SplitHandle />
                  <HScrollBody>
                    <ScrollButton aria-label="Scroll left"><Arrow d="M8 2v7L4 5.500z" /></ScrollButton>
                    <Spacer $grow={328} />
                    <Thumb $active />
                    <Spacer $grow={49} />
                    <ScrollButton aria-label="Scroll right"><Arrow d="M5 2v7l4-3.500z" /></ScrollButton>
                  </HScrollBody>
                </HScroll>
              </TabRow>
            </Document>
          </Main>

          <CommandPanel>
            <CommandGrip><GripDots /></CommandGrip>
            <CommandBody>
              <History>{"Command: Specify opposite corner or [Fence/WPolygon/CPolygon]:\nCommand: Specify opposite corner or [Fence/WPolygon/CPolygon]:"}</History>
              <CommandLabel>Command:<CommandInput /></CommandLabel>
            </CommandBody>
          </CommandPanel>

          <StatusBar>
            <Coordinates>223.8793, 76.7204, 0.0000</Coordinates>
            {MODES.map(([m, w, on]) => <StatusButton key={m} $w={w} $on={on} aria-pressed={!!on}>{m}</StatusButton>)}
            <StatusGap $w={1} />
            <StatusRight>
              <StatusButton $w={43}>PAPER</StatusButton>
              <StatusButton $w={22} aria-label="Model space"><Icon name="modelspace" /></StatusButton>
              <StatusButton $w={22} aria-label="Quick view"><Icon name="quickview" /></StatusButton>
              <StatusGap $w={24} />
              <StatusButton $w={14} aria-label="Previous viewport"><Arrow d="M8 2v7L4 5.500z" color="#ccc" /></StatusButton>
              <StatusButton $w={22} $on aria-label="Maximize viewport"><Icon name="maximize" /></StatusButton>
              <StatusButton $w={14} aria-label="Next viewport"><Arrow d="M5 2v7l4-3.500z" color="#ccc" /></StatusButton>
              <StatusButton $w={22} aria-label="Annotation visibility"><Icon name="anno" /></StatusButton>
              <StatusButton $w={22} aria-label="Annotation scale"><Icon name="annoauto" /></StatusButton>
              <StatusGap $w={6} />
              <StatusButton $w={22} aria-label="Workspace switching"><Icon name="wsgear" /></StatusButton>
              <StatusButton $w={22} aria-label="Lock toolbars"><Icon name="unlock" /></StatusButton>
              <StatusButton $w={22} aria-label="Hardware acceleration"><Icon name="hardware" /></StatusButton>
              <Tray><Icon name="tray" /><Icon name="bulb" /></Tray>
              <StatusButton $w={11} aria-label="Status menu"><Caret size={5} color="#000" /></StatusButton>
              <StatusButton $w={23} aria-label="Clean screen"><Icon name="clean" /></StatusButton>
              <StatusGap $w={1} />
              <svg width="15" height="21" aria-hidden="true"><path d="M11 9h2M7 13h2M11 13h2M3 17h2M7 17h2M11 17h2" stroke="#ddd" strokeWidth="2" /></svg>
            </StatusRight>
          </StatusBar>
        </Workspace>
      </Frame>
    </Desktop>
  );
}
